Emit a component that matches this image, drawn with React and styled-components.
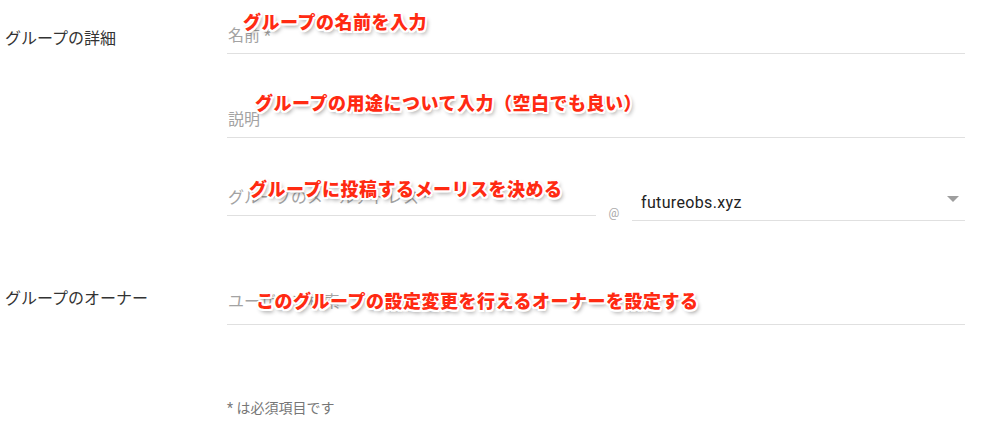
import React from 'react';
import styled, { createGlobalStyle } from 'styled-components';

const Global = createGlobalStyle`
  html, body {
    margin: 0;
    padding: 0;
    background: #fff;
  }
  body {
    font-family: Roboto, "Noto Sans CJK JP", sans-serif;
    color: rgba(0, 0, 0, 0.87);
  }
`;

const Page = styled.div`
  width: 983px;
  height: 447px;
  padding-left: 5px;
  box-sizing: border-box;
  overflow: hidden;
`;

const Section = styled.section`
  display: grid;
  grid-template-columns: 222px 738px;
  margin-top: ${p => p.$top}px;
`;

const Label = styled.div`
  font-size: 16px;
  line-height: 20px;
  color: #333;
  padding-top: ${p => p.$pad}px;
`;

const Fields = styled.div`
  display: flex;
  flex-direction: column;
  padding-top: ${p => p.$pad}px;
`;

const Field = styled.div`
  position: relative;
  display: flex;
  align-items: flex-end;
  box-sizing: border-box;
  height: ${p => p.$h || 34}px;
  width: ${p => (p.$w ? `${p.$w}px` : 'auto')};
  padding-bottom: ${p => p.$pb || 7}px;
  margin-top: ${p => p.$mt || 0}px;
  border-bottom: 1px solid #e0e0e0;
`;

const Placeholder = styled.span`
  font-size: 16px;
  line-height: 20px;
  color: #a3a3a3;
  padding-left: 1px;
  white-space: nowrap;
`;

const Value = styled.span`
  font-size: 16px;
  line-height: 20px;
  letter-spacing: 0.35px;
  color: #222;
  padding-left: 9px;
`;

const Row = styled.div`
  display: flex;
  align-items: flex-start;
  margin-top: ${p => p.$mt}px;
`;

const At = styled.div`
  width: 36px;
  height: 39px;
  display: flex;
  align-items: flex-end;
  justify-content: center;
  padding-bottom: 1px;
  box-sizing: border-box;
  font-size: 12px;
  line-height: 14px;
  color: #aaa;
`;

const Select = styled(Field)`
  flex: 1;
  justify-content: space-between;
  padding-right: 6px;
`;

const Arrow = styled.span`
  width: 0;
  height: 0;
  border-left: 6px solid transparent;
  border-right: 6px solid transparent;
  border-top: 6px solid #9e9e9e;
  margin-bottom: 11px;
`;

const Note = styled.span`
  position: absolute;
  left: ${p => p.$x}px;
  top: ${p => p.$y}px;
  font-size: 18px;
  line-height: 1;
  font-weight: 900;
  white-space: nowrap;
  color: #ff2a12;
  letter-spacing: 0.5px;
  text-shadow:
    2px 0 0 #fff, -2px 0 0 #fff, 0 2px 0 #fff, 0 -2px 0 #fff,
    1.5px 1.5px 0 #fff, -1.5px 1.5px 0 #fff, 1.5px -1.5px 0 #fff, -1.5px -1.5px 0 #fff,
    2px 3px 4px rgba(0, 0, 0, 0.45);
`;

const Footer = styled.div`
  margin-top: 74px;
  padding-left: 222px;
  font-size: 14px;
  line-height: 18px;
  color: #777;
`;

export default function App() {
  return (
    <Page>
      <Global />
      <Section $top={0}>
        <Label $pad={29}>グループの詳細</Label>
        <Fields $pad={20}>
          <Field>
            <Placeholder>名前 *</Placeholder>
            <Note $x={16} $y={-6}>グループの名前を入力</Note>
          </Field>
          <Field $mt={50}>
            <Placeholder>説明</Placeholder>
            <Note $x={28} $y={-9}>グループの用途について入力（空白でも良い）</Note>
          </Field>
          <Row $mt={44}>
            <Field $w={369}>
              <Placeholder>グループのメールアドレス *</Placeholder>
              <Note $x={22} $y={-1}>グループに投稿するメーリスを決める</Note>
            </Field>
            <At>@</At>
            <Select $h={39}>
              <Value>futureobs.xyz</Value>
              <Arrow />
            </Select>
          </Row>
        </Fields>
      </Section>
      <Section $top={49}>
        <Label $pad={19}>グループのオーナー</Label>
        <Fields $pad={21}>
          <Field $pb={12}>
            <Placeholder>ユーザーを検索</Placeholder>
            <Note $x={29} $y={2}>このグループの設定変更を行えるオーナーを設定する</Note>
          </Field>
        </Fields>
      </Section>
      <Footer>* は必須項目です</Footer>
    </Page>
  );
}
